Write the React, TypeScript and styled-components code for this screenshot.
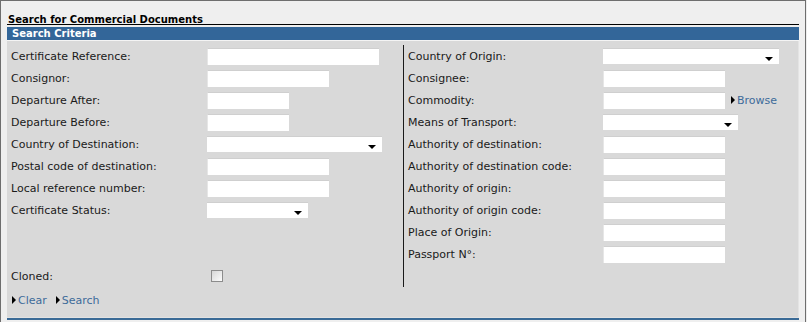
import React from "react";
import styled, { createGlobalStyle } from "styled-components";

const Global = createGlobalStyle`
  html, body { margin: 0; padding: 0; background: #eeeeee; }
  body { font-family: "DejaVu Sans", Verdana, sans-serif; font-size: 11px; color: #1a1a1a; }
`;

const Frame = styled.div`
  box-sizing: border-box;
  width: 806px;
  height: 322px;
  border: 1px solid #6e6e6e;
  border-bottom: none;
  background: #efefef;
  padding: 0 6px 0 6px;
`;

const Title = styled.div`
  height: 24px;
  box-sizing: border-box;
  border-bottom: 1px solid #000;
  font-weight: bold;
  font-size: 10px;
  line-height: 11px;
  padding: 13px 0 0 1px;
  color: #000;
`;

const HeaderBar = styled.div`
  margin-top: 2px;
  height: 13px;
  background: #336699;
  color: #fff;
  font-weight: bold;
  font-size: 10px;
  line-height: 13px;
  padding-left: 5px;
  border-bottom: 1px solid #f4f4f4;
`;

const Panel = styled.div`
  background: #d9d9d9;
  border-right: 1px solid #e4e4e4;
  padding-top: 4px;
  height: 277px;
  box-sizing: border-box;
  border-bottom: 1px solid #e2e2e2;
`;

const BottomRule = styled.div`
  height: 2px;
  background: #3a6a96;
`;

const Columns = styled.div`
  display: grid;
  grid-template-columns: 396px 1fr;
`;

const LeftCol = styled.div`
  display: flex;
  flex-direction: column;
  padding-left: 4px;
`;

const RightCol = styled.div`
  display: flex;
  flex-direction: column;
  border-left: 1px solid #1a1a1a;
  padding-left: 4px;
`;

const Row = styled.div`
  display: flex;
  align-items: center;
  height: 22px;
`;

const Label = styled.div<{ $w: number }>`
  width: ${(p) => p.$w}px;
  flex: none;
  white-space: nowrap;
`;

const TextBox = styled.div<{ $w: number }>`
  width: ${(p) => p.$w}px;
  height: 17px;
  box-sizing: border-box;
  background: #fff;
  border-top: 1px solid #cfcfcf;
  border-left: 1px solid #e6e6e6;
`;

const SelectBox = styled.div<{ $w: number }>`
  position: relative;
  width: ${(p) => p.$w}px;
  height: 16px;
  box-sizing: border-box;
  background: #fff;
  border-top: 1px solid #cfcfcf;
  &::after {
    content: "";
    position: absolute;
    right: 6px;
    bottom: 3px;
    border-left: 4px solid transparent;
    border-right: 4px solid transparent;
    border-top: 4px solid #000;
  }
`;

const Check = styled.div`
  width: 12px;
  height: 12px;
  box-sizing: border-box;
  margin-left: 4px;
  border: 1px solid #8c8c8c;
  background: linear-gradient(135deg, #d6d6d6 0%, #f4f4f4 80%, #ffffff 100%);
`;

const Link = styled.a`
  display: inline-flex;
  align-items: center;
  color: #3d6b9a;
  text-decoration: none;
  white-space: nowrap;
  &::before {
    content: "";
    display: inline-block;
    margin-right: 2px;
    border-top: 4px solid transparent;
    border-bottom: 4px solid transparent;
    border-left: 4px solid #000;
  }
`;

const Actions = styled.div`
  display: flex;
  gap: 9px;
  align-items: center;
  height: 22px;
  padding-left: 5px;
  margin-top: 2px;
`;

const Browse = styled(Link)`
  margin-left: 6px;
`;

type Field = { label: string; kind: "text" | "select"; w: number; browse?: boolean };

const left: Field[] = [
  { label: "Certificate Reference:", kind: "text", w: 172 },
  { label: "Consignor:", kind: "text", w: 122 },
  { label: "Departure After:", kind: "text", w: 82 },
  { label: "Departure Before:", kind: "text", w: 82 },
  { label: "Country of Destination:", kind: "select", w: 175 },
  { label: "Postal code of destination:", kind: "text", w: 122 },
  { label: "Local reference number:", kind: "text", w: 122 },
  { label: "Certificate Status:", kind: "select", w: 101 },
];

const right: Field[] = [
  { label: "Country of Origin:", kind: "select", w: 176 },
  { label: "Consignee:", kind: "text", w: 122 },
  { label: "Commodity:", kind: "text", w: 122, browse: true },
  { label: "Means of Transport:", kind: "select", w: 135 },
  { label: "Authority of destination:", kind: "text", w: 122 },
  { label: "Authority of destination code:", kind: "text", w: 122 },
  { label: "Authority of origin:", kind: "text", w: 122 },
  { label: "Authority of origin code:", kind: "text", w: 122 },
  { label: "Place of Origin:", kind: "text", w: 122 },
  { label: "Passport N°:", kind: "text", w: 122 },
];

const FieldRow = ({ f, lw }: { f: Field; lw: number }) => (
  <Row>
    <Label $w={lw}>{f.label}</Label>
    {f.kind === "text" ? <TextBox $w={f.w} /> : <SelectBox $w={f.w} />}
    {f.browse && <Browse href="#">Browse</Browse>}
  </Row>
);

export default function App() {
  return (
    <>
      <Global />
      <Frame>
        <Title>Search for Commercial Documents</Title>
        <HeaderBar>Search Criteria</HeaderBar>
        <Panel>
          <Columns>
            <LeftCol>
              {left.map((f) => (
                <FieldRow key={f.label} f={f} lw={196} />
              ))}
              <Row />
              <Row />
              <Row>
                <Label $w={196}>Cloned:</Label>
                <Check />
              </Row>
            </LeftCol>
            <RightCol>
              {right.map((f) => (
                <FieldRow key={f.label} f={f} lw={195} />
              ))}
            </RightCol>
          </Columns>
          <Actions>
            <Link href="#">Clear</Link>
            <Link href="#">Search</Link>
          </Actions>
        </Panel>
        <BottomRule />
      </Frame>
    </>
  );
}
